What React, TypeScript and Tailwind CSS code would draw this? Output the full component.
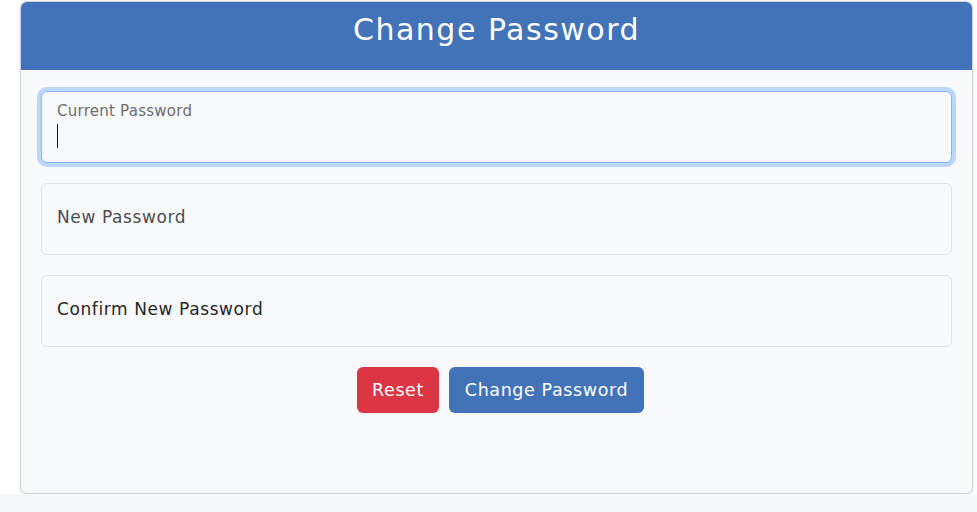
import React from "react";

const font = { fontFamily: '"DejaVu Sans", "Open Sans", sans-serif' };

export default function App() {
  return (
    <div className="min-h-[512px] w-[977px] bg-white flex flex-col" style={font}>
      <div className="flex pl-[20px] pr-[4px] pt-[1px] bg-white">
        <div className="flex-1 h-[493px] flex flex-col rounded-[7px] border border-[#cfd1d4] bg-[#f8f9fb] shadow-[0_1px_3px_rgba(0,0,0,0.12)] overflow-hidden">
          <div className="h-[68px] bg-[#4273b9] flex items-center justify-center">
            <h3 className="text-white text-[30px] tracking-[1.5px] leading-none -mt-[12px]">Change Password</h3>
          </div>
          <div className="flex flex-col px-[20px] pt-[21px] gap-[20px]">
            <div className="h-[72px] rounded-[6px] border border-[#86b7fe] bg-[#f8f9fb] shadow-[0_0_0_4px_rgba(13,110,253,0.25)] px-[15px] pt-[10px] flex flex-col">
              <span className="text-[15px] tracking-[0.25px] text-[#6b6d70] leading-[18px]">Current Password</span>
              <span className="mt-[4px] w-[1px] h-[24px] bg-[#111]" />
            </div>
            <div className="h-[72px] rounded-[6px] border border-[#e0e2e5] bg-[#f8f9fb] px-[15px] flex items-center">
              <span className="text-[17px] tracking-[0.6px] text-[#4b4d50] -mt-[2px]">New Password</span>
            </div>
            <div className="h-[72px] rounded-[6px] border border-[#e0e2e5] bg-[#f8f9fb] px-[15px] flex items-center">
              <span className="text-[17px] tracking-[0.6px] text-[#25272a] -mt-[2px]">Confirm New Password</span>
            </div>
            <div className="flex justify-center gap-[10px] pl-[8px]">
              <button className="h-[46px] w-[82px] rounded-[6px] bg-[#dc3545] text-white text-[17.5px] tracking-[0.6px]">Reset</button>
              <button className="h-[46px] w-[195px] rounded-[6px] bg-[#4273b9] text-white text-[17.5px] tracking-[0.6px]">Change Password</button>
            </div>
          </div>
        </div>
      </div>
      <div className="flex-1 bg-[#f6f7f9]" />
    </div>
  );
}
